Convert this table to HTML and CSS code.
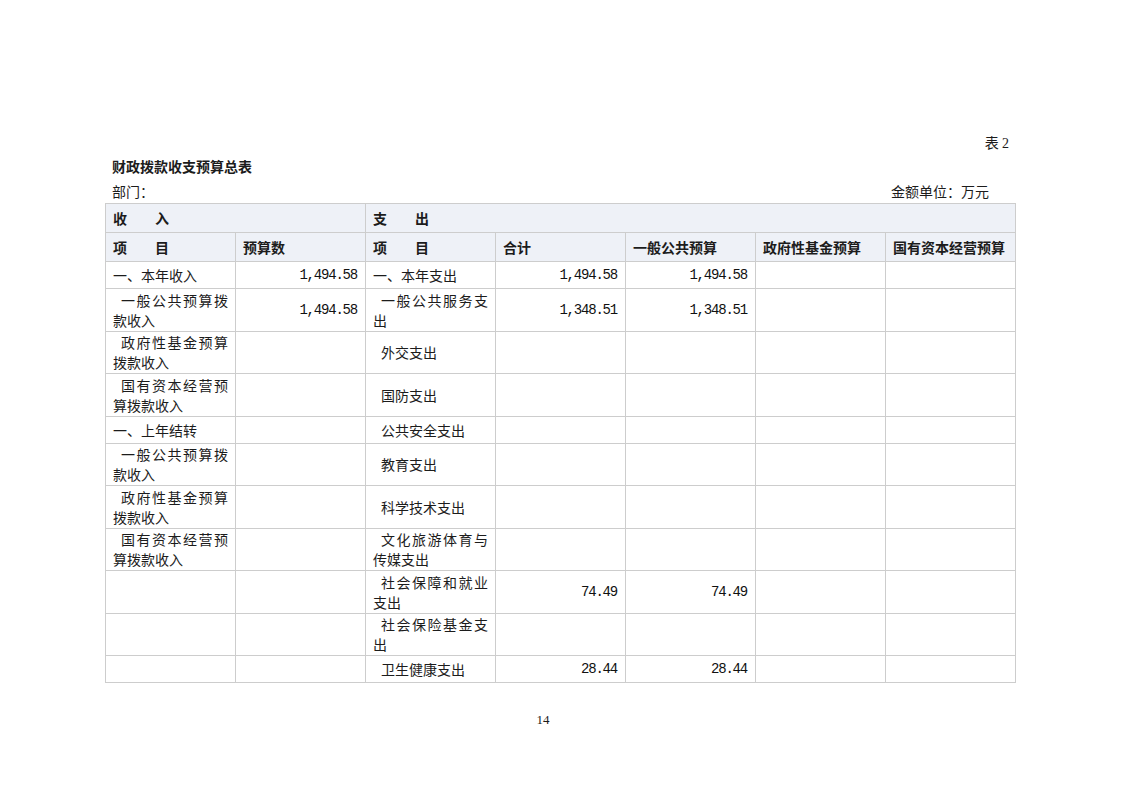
FILE: index.html
```html
<!DOCTYPE html>
<html lang="zh-CN">
<head>
<meta charset="utf-8">
<title>财政拨款收支预算总表</title>
<link rel="stylesheet" href="styles.css">
</head>
<body>
<div class="page">
  <div class="doc-no">表 <span class="latin">2</span></div>
  <div class="title">财政拨款收支预算总表</div>
  <div class="meta"><span>部门：</span><span>金额单位：万元</span></div>
  <table class="budget">
    <colgroup>
      <col class="c"><col class="c"><col class="c"><col class="c"><col class="c"><col class="c"><col class="c">
    </colgroup>
    <thead>
      <tr class="hr">
        <th colspan="2">收　　入</th>
        <th colspan="5">支　　出</th>
      </tr>
      <tr class="hr">
        <th>项　　目</th>
        <th>预算数</th>
        <th>项　　目</th>
        <th>合计</th>
        <th>一般公共预算</th>
        <th>政府性基金预算</th>
        <th>国有资本经营预算</th>
      </tr>
    </thead>
    <tbody>
      <tr class="r1">
        <td>一、本年收入</td>
        <td class="num">1,494.58</td>
        <td>一、本年支出</td>
        <td class="num">1,494.58</td>
        <td class="num">1,494.58</td>
        <td></td><td></td>
      </tr>
      <tr class="r2">
        <td class="ind">一般公共预算拨款收入</td>
        <td class="num">1,494.58</td>
        <td class="ind">一般公共服务支出</td>
        <td class="num">1,348.51</td>
        <td class="num">1,348.51</td>
        <td></td><td></td>
      </tr>
      <tr class="r2">
        <td class="ind">政府性基金预算拨款收入</td>
        <td></td>
        <td class="ind">外交支出</td>
        <td></td><td></td><td></td><td></td>
      </tr>
      <tr class="r2">
        <td class="ind">国有资本经营预算拨款收入</td>
        <td></td>
        <td class="ind">国防支出</td>
        <td></td><td></td><td></td><td></td>
      </tr>
      <tr class="r1">
        <td>一、上年结转</td>
        <td></td>
        <td class="ind">公共安全支出</td>
        <td></td><td></td><td></td><td></td>
      </tr>
      <tr class="r2">
        <td class="ind">一般公共预算拨款收入</td>
        <td></td>
        <td class="ind">教育支出</td>
        <td></td><td></td><td></td><td></td>
      </tr>
      <tr class="r2">
        <td class="ind">政府性基金预算拨款收入</td>
        <td></td>
        <td class="ind">科学技术支出</td>
        <td></td><td></td><td></td><td></td>
      </tr>
      <tr class="r2">
        <td class="ind">国有资本经营预算拨款收入</td>
        <td></td>
        <td class="ind">文化旅游体育与传媒支出</td>
        <td></td><td></td><td></td><td></td>
      </tr>
      <tr class="r2">
        <td></td>
        <td></td>
        <td class="ind">社会保障和就业支出</td>
        <td class="num">74.49</td>
        <td class="num">74.49</td>
        <td></td><td></td>
      </tr>
      <tr class="r2">
        <td></td>
        <td></td>
        <td class="ind">社会保险基金支出</td>
        <td></td><td></td><td></td><td></td>
      </tr>
      <tr class="r1">
        <td></td>
        <td></td>
        <td class="ind">卫生健康支出</td>
        <td class="num">28.44</td>
        <td class="num">28.44</td>
        <td></td><td></td>
      </tr>
    </tbody>
  </table>
  <div class="page-no">14</div>
</div>
</body>
</html>
```

FILE: styles.css
```css
html, body {
  margin: 0;
  padding: 0;
  background: #ffffff;
}

body {
  font-family: "Noto Sans CJK SC", "Noto Sans", sans-serif;
  font-size: 14px;
  color: #1c1c1c;
}

.page {
  width: 910px;
  padding: 133px 0 40px 105px;
}

.latin {
  font-family: "Liberation Serif", serif;
}

.doc-no {
  text-align: right;
  padding-right: 6px;
  line-height: 18px;
  height: 18px;
}

.title {
  margin-top: 6px;
  padding-left: 7px;
  line-height: 18px;
  height: 18px;
  font-weight: 700;
}

.meta {
  display: flex;
  justify-content: space-between;
  margin-top: 7px;
  margin-bottom: 3px;
  padding: 0 26px 0 7px;
  line-height: 18px;
  height: 18px;
}

.budget {
  width: 910px;
  border-collapse: collapse;
  table-layout: fixed;
}

.budget col.c {
  width: 130px;
}

.budget th,
.budget td {
  border: 1px solid #cdcdcd;
  padding: 0 7px;
  line-height: 20px;
  vertical-align: middle;
  text-align: left;
}

.budget th {
  background: #eef1f7;
  font-weight: 700;
}

.budget tr.hr {
  height: 29px;
}

.budget tr.r1 {
  height: 27px;
}

.budget tr.r2 {
  height: 42.5px;
}

.budget td.ind {
  text-align: justify;
  text-indent: 8px;
}

.budget td.num {
  text-align: right;
  font-family: "Liberation Mono", monospace;
  font-size: 14px;
  letter-spacing: -1.2px;
  padding-right: 8px;
  color: #111111;
}

.page-no {
  margin-top: 28px;
  padding-right: 34px;
  text-align: center;
  font-family: "Liberation Serif", serif;
  font-size: 13px;
  line-height: 18px;
}
```
